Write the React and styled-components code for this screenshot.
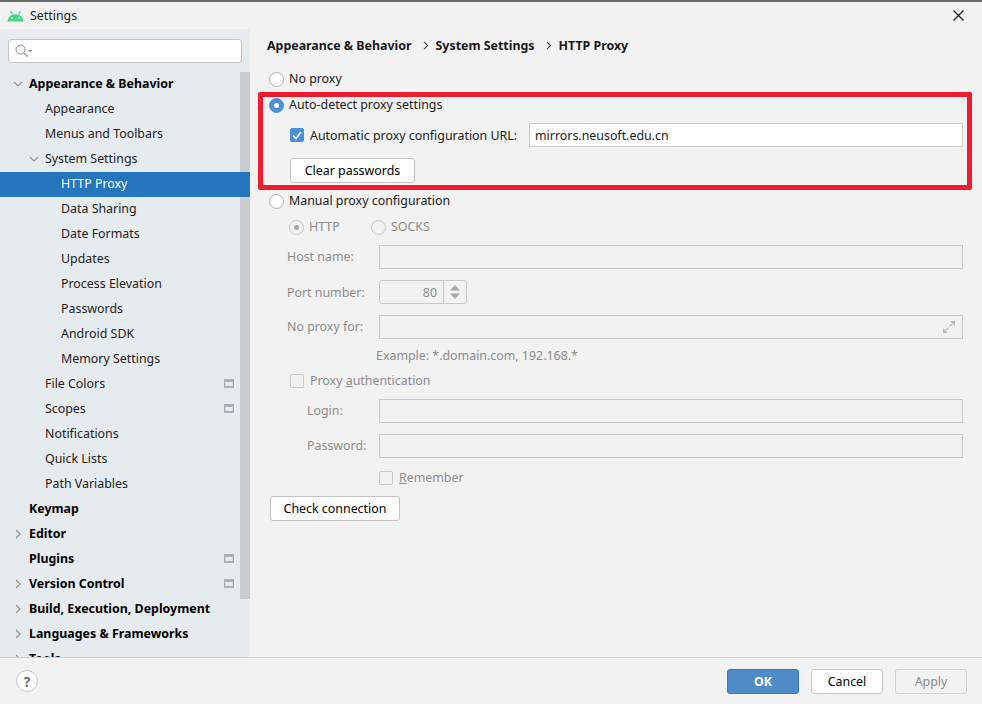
import React from 'react';
import styled, { createGlobalStyle } from 'styled-components';

const GlobalStyle = createGlobalStyle`
  html, body {
    margin: 0;
    padding: 0;
    height: 100%;
    background: #f2f2f2;
    font-family: "Noto Sans", "Open Sans", sans-serif;
    font-size: 12.4px;
    color: #1a1a1a;
  }
`;

const Window = styled.div`
  width: 982px;
  height: 704px;
  display: flex;
  flex-direction: column;
  overflow: hidden;
  background: #f2f2f2;
  border-top: 2px solid #6b6b6b;
  box-sizing: border-box;
`;

const TitleBar = styled.div`
  height: 27px;
  flex: none;
  display: flex;
  align-items: center;
  padding: 0 18px 0 7px;
  gap: 6px;
`;

const TitleText = styled.span`
  flex: 1;
  color: #222;
`;

const Main = styled.div`
  flex: 1;
  min-height: 0;
  display: flex;
`;

const Sidebar = styled.aside`
  width: 250px;
  flex: none;
  position: relative;
  overflow: hidden;
  background: #e6ebf0;
`;

const SearchBox = styled.div`
  height: 24px;
  box-sizing: border-box;
  margin: 10px 8px 9px;
  padding-left: 6px;
  display: flex;
  align-items: center;
  background: #fff;
  border: 1px solid #c4c4c4;
  border-radius: 3px;
`;

const Scrollbar = styled.div`
  position: absolute;
  top: 43px;
  right: 0;
  width: 10px;
  height: 527px;
  background: #c9cdd1;
`;

const TreeRow = styled.div`
  position: relative;
  height: 25px;
  box-sizing: border-box;
  padding-bottom: 3px;
  display: flex;
  align-items: center;
  padding-left: ${({ $level }) => [29, 45, 61][$level]}px;
  font-weight: ${({ $level }) => ($level === 0 ? 700 : 400)};
  color: ${({ $selected, $level }) => ($selected ? '#fff' : $level === 0 ? '#000' : '#222')};
  background: ${({ $selected }) => ($selected ? '#2675bf' : 'transparent')};
`;

const Arrow = styled.svg`
  position: absolute;
  left: ${({ $level }) => ($level === 0 ? 13 : 29)}px;
  top: 7px;
`;

const ProjectMark = styled.svg`
  position: absolute;
  left: 224px;
  top: 7px;
`;

const Content = styled.section`
  flex: 1;
  min-width: 0;
  position: relative;
  padding: 0 19px 0 20px;
`;

const Breadcrumb = styled.div`
  height: 32px;
  margin: 0 0 5px -3px;
  display: flex;
  align-items: center;
  font-weight: 700;
  color: #1a1a1a;
`;

const CrumbSeparator = styled.svg`
  margin: 0 7px 0 11px;
`;

const Radio = styled.span`
  width: 15px;
  height: 15px;
  flex: none;
  box-sizing: border-box;
  border-radius: 50%;
  margin-left: -1px;
  margin-right: 5px;
  display: flex;
  align-items: center;
  justify-content: center;
  border: 1px solid ${({ $on, $off }) => ($on ? '#4a90d9' : $off ? '#c8c8c8' : '#b0b0b0')};
  background: ${({ $on, $off }) => ($on ? '#4a90d9' : $off ? '#f2f2f2' : '#fff')};

  &::after {
    content: '';
    display: ${({ $on, $dot }) => ($on || $dot ? 'block' : 'none')};
    width: 5px;
    height: 5px;
    border-radius: 50%;
    background: ${({ $on }) => ($on ? '#fff' : '#a8a8a8')};
  }
`;

const RadioOption = styled.span`
  display: flex;
  align-items: center;
  width: ${({ $w }) => ($w ? `${$w}px` : 'auto')};
`;

const CheckBox = styled.span`
  width: 14px;
  height: 14px;
  flex: none;
  box-sizing: border-box;
  border-radius: 2px;
  margin-right: 6px;
  display: flex;
  align-items: center;
  justify-content: center;
  border: 1px solid ${({ $on }) => ($on ? '#4a90d9' : '#c8c8c8')};
  background: ${({ $on }) => ($on ? '#4a90d9' : '#f2f2f2')};
`;

const Label = styled.span`
  flex: none;
  width: ${({ $w }) => ($w ? `${$w}px` : 'auto')};
`;

const Field = styled.div`
  flex: 1;
  height: 24px;
  box-sizing: border-box;
  position: relative;
  padding: 0 5px;
  display: flex;
  align-items: center;
  border: 1px solid #c8c8c8;
  background: ${({ $white }) => ($white ? '#fff' : '#f2f2f2')};
  color: #1a1a1a;
`;

const ExpandIcon = styled.svg`
  position: absolute;
  right: 7px;
  top: 5px;
`;

const Spinner = styled.div`
  width: 88px;
  height: 24px;
  box-sizing: border-box;
  display: flex;
  border: 1px solid #c8c8c8;
  border-radius: 3px;
`;

const SpinnerValue = styled.div`
  flex: 1;
  padding-right: 6px;
  display: flex;
  align-items: center;
  justify-content: flex-end;
  color: #8c8c8c;
  border-right: 1px solid #c8c8c8;
`;

const SpinnerArrows = styled.div`
  width: 22px;
  display: flex;
  align-items: center;
  justify-content: center;
`;

// $up lifts a row's text 1px above its control, the way the labels sit in the dialog
const Row = styled.div`
  height: ${({ $h }) => $h}px;
  box-sizing: border-box;
  margin-top: ${({ $mt }) => $mt || 0}px;
  padding-left: ${({ $indent }) => $indent || 0}px;
  padding-bottom: ${({ $up }) => ($up ? 2 : 0)}px;
  display: flex;
  align-items: center;
  color: ${({ $off }) => ($off ? '#8c8c8c' : '#1a1a1a')};

  ${Radio}, ${CheckBox}, ${Field}, ${Spinner} {
    margin-top: ${({ $up }) => ($up ? 2 : 0)}px;
  }
`;

const Button = styled.button`
  height: 25px;
  width: ${({ $w }) => $w}px;
  box-sizing: border-box;
  padding: 0;
  flex: none;
  font: inherit;
  color: ${({ $primary, $disabled }) => ($primary ? '#fff' : $disabled ? '#8c8c8c' : '#000')};
  font-weight: ${({ $primary }) => ($primary ? 700 : 400)};
  background: ${({ $primary, $disabled }) => ($primary ? '#4f8ac9' : $disabled ? '#f2f2f2' : '#fff')};
  border: 1px solid ${({ $primary, $disabled }) => ($primary ? '#3f77b3' : $disabled ? '#d0d0d0' : '#c4c4c4')};
  border-radius: 3px;
`;

const Underlined = styled.span`
  text-decoration: underline;
`;

const Annotation = styled.div`
  position: absolute;
  left: 8px;
  top: 63px;
  width: 714px;
  height: 98px;
  box-sizing: border-box;
  border: 5px solid #ee1c2e;
  border-radius: 2px;
  pointer-events: none;
`;

const Footer = styled.footer`
  height: 46px;
  flex: none;
  display: flex;
  align-items: center;
  gap: 12px;
  padding: 0 15px 0 16px;
  border-top: 1px solid #d1d1d1;
`;

const HelpButton = styled.div`
  width: 22px;
  height: 22px;
  margin-right: auto;
  box-sizing: border-box;
  border: 1px solid #c4c4c4;
  border-radius: 50%;
  background: #fff;
  display: flex;
  align-items: center;
  justify-content: center;
  font-weight: 700;
  font-size: 14px;
  color: #6e6e6e;
`;

const AndroidLogo = () => (
  <svg width="17" height="12" viewBox="0 0 17 12">
    <path d="M.5 11.5C.8 7.2 4 4.2 8.5 4.2s7.7 3 8 7.3z" fill="#3ddc84" />
    <path d="M3.4 1l2 3.4M13.6 1l-2 3.4" stroke="#3ddc84" strokeWidth="1.2" />
    <circle cx="5" cy="8" r=".9" fill="#f2f2f2" />
    <circle cx="12" cy="8" r=".9" fill="#f2f2f2" />
  </svg>
);

const SearchIcon = () => (
  <svg width="18" height="14" viewBox="0 0 18 14">
    <circle cx="5.5" cy="5.5" r="4.5" fill="none" stroke="#8e8e8e" />
    <path d="M8.8 8.8l3.6 3.8" stroke="#8e8e8e" strokeWidth="1.2" />
    <path d="M13 6h4.5l-2.2 2.6z" fill="#8e8e8e" />
  </svg>
);

const CloseIcon = () => (
  <svg width="11" height="11" viewBox="0 0 11 11">
    <path d="M.5.5l10 10M10.5.5l-10 10" stroke="#1a1a1a" strokeWidth="1.2" />
  </svg>
);

const ProjectIcon = () => (
  <ProjectMark width="10" height="9" viewBox="0 0 10 9">
    <rect width="10" height="9" fill="#a9b0b8" />
    <rect x="1.5" y="3" width="7" height="4" fill="#e6ebf0" />
  </ProjectMark>
);

const TREE = [
  { text: 'Appearance & Behavior', level: 0, arrow: 'down' },
  { text: 'Appearance', level: 1 },
  { text: 'Menus and Toolbars', level: 1 },
  { text: 'System Settings', level: 1, arrow: 'down' },
  { text: 'HTTP Proxy', level: 2, selected: true },
  { text: 'Data Sharing', level: 2 },
  { text: 'Date Formats', level: 2 },
  { text: 'Updates', level: 2 },
  { text: 'Process Elevation', level: 2 },
  { text: 'Passwords', level: 2 },
  { text: 'Android SDK', level: 2 },
  { text: 'Memory Settings', level: 2 },
  { text: 'File Colors', level: 1, project: true },
  { text: 'Scopes', level: 1, project: true },
  { text: 'Notifications', level: 1 },
  { text: 'Quick Lists', level: 1 },
  { text: 'Path Variables', level: 1 },
  { text: 'Keymap', level: 0 },
  { text: 'Editor', level: 0, arrow: 'right' },
  { text: 'Plugins', level: 0, project: true },
  { text: 'Version Control', level: 0, arrow: 'right', project: true },
  { text: 'Build, Execution, Deployment', level: 0, arrow: 'right' },
  { text: 'Languages & Frameworks', level: 0, arrow: 'right' },
  { text: 'Tools', level: 0, arrow: 'right' },
];

const TreeItem = ({ item }) => (
  <TreeRow $level={item.level} $selected={item.selected}>
    {item.arrow && (
      <Arrow $level={item.level} width="10" height="10" viewBox="0 0 10 10">
        <path
          d={item.arrow === 'down' ? 'M1 3l4 4 4-4' : 'M3 1l4 4-4 4'}
          fill="none"
          stroke="#8f8f8f"
          strokeWidth="1.1"
        />
      </Arrow>
    )}
    {item.text}
    {item.project && <ProjectIcon />}
  </TreeRow>
);

const Crumb = () => (
  <CrumbSeparator width="6" height="9" viewBox="0 0 6 9">
    <path d="M1 .8l3.6 3.7L1 8.2" fill="none" stroke="#444" strokeWidth="1.1" />
  </CrumbSeparator>
);

const App = () => (
  <>
    <GlobalStyle />
    <Window>
      <TitleBar>
        <AndroidLogo />
        <TitleText>Settings</TitleText>
        <CloseIcon />
      </TitleBar>
      <Main>
        <Sidebar>
          <SearchBox>
            <SearchIcon />
          </SearchBox>
          <Scrollbar />
          {TREE.map((item) => (
            <TreeItem key={item.text} item={item} />
          ))}
        </Sidebar>
        <Content>
          <Breadcrumb>
            Appearance &amp; Behavior
            <Crumb />
            System Settings
            <Crumb />
            HTTP Proxy
          </Breadcrumb>
          <Row $h={26} $up>
            <Radio />
            No proxy
          </Row>
          <Row $h={26} $up>
            <Radio $on />
            Auto-detect proxy settings
          </Row>
          <Row $h={34} $indent={20}>
            <CheckBox $on>
              <svg width="10" height="9" viewBox="0 0 10 9">
                <path d="M1 4.5l3 3L9 1" fill="none" stroke="#fff" strokeWidth="1.7" />
              </svg>
            </CheckBox>
            <Label $w={219}>Automatic proxy configuration URL:</Label>
            <Field $white>mirrors.neusoft.edu.cn</Field>
          </Row>
          <Row $h={36} $indent={20}>
            <Button $w={125}>Clear passwords</Button>
          </Row>
          <Row $h={26} $up>
            <Radio />
            Manual proxy configuration
          </Row>
          <Row $h={26} $indent={20} $off $up>
            <RadioOption $w={82}>
              <Radio $off $dot />
              HTTP
            </RadioOption>
            <RadioOption>
              <Radio $off />
              SOCKS
            </RadioOption>
          </Row>
          <Row $h={34} $indent={17} $off $up>
            <Label $w={92}>Host name:</Label>
            <Field />
          </Row>
          <Row $h={34} $mt={1} $indent={17} $off>
            <Label $w={92}>Port number:</Label>
            <Spinner>
              <SpinnerValue>80</SpinnerValue>
              <SpinnerArrows>
                <svg width="10" height="14" viewBox="0 0 10 14">
                  <path d="M5 0l5 5.5H0zM5 14l5-5.5H0z" fill="#a8a8a8" />
                </svg>
              </SpinnerArrows>
            </Spinner>
          </Row>
          <Row $h={34} $mt={1} $indent={17} $off $up>
            <Label $w={92}>No proxy for:</Label>
            <Field>
              <ExpandIcon width="12" height="12" viewBox="0 0 12 12">
                <path d="M12 0v5L7 0zM0 12V7l5 5z" fill="#b4bbc1" />
                <path d="M9 3L6.6 5.4M3 9l2.4-2.4" stroke="#b4bbc1" strokeWidth="1.2" />
              </ExpandIcon>
            </Field>
          </Row>
          <Row $h={24} $indent={106} $off $up>
            Example: *.domain.com, 192.168.*
          </Row>
          <Row $h={26} $indent={20} $off $up>
            <CheckBox />
            <span>
              Proxy <Underlined>a</Underlined>uthentication
            </span>
          </Row>
          <Row $h={34} $indent={37} $off $up>
            <Label $w={72}>Login:</Label>
            <Field />
          </Row>
          <Row $h={34} $mt={1} $indent={37} $off $up>
            <Label $w={72}>Password:</Label>
            <Field />
          </Row>
          <Row $h={26} $mt={2} $indent={109} $off $up>
            <CheckBox />
            <span>
              <Underlined>R</Underlined>emember
            </span>
          </Row>
          <Row $h={34}>
            <Button $w={130}>Check connection</Button>
          </Row>
          <Annotation />
        </Content>
      </Main>
      <Footer>
        <HelpButton>?</HelpButton>
        <Button $w={72} $primary>OK</Button>
        <Button $w={72}>Cancel</Button>
        <Button $w={72} $disabled>Apply</Button>
      </Footer>
    </Window>
  </>
);

export default App;
